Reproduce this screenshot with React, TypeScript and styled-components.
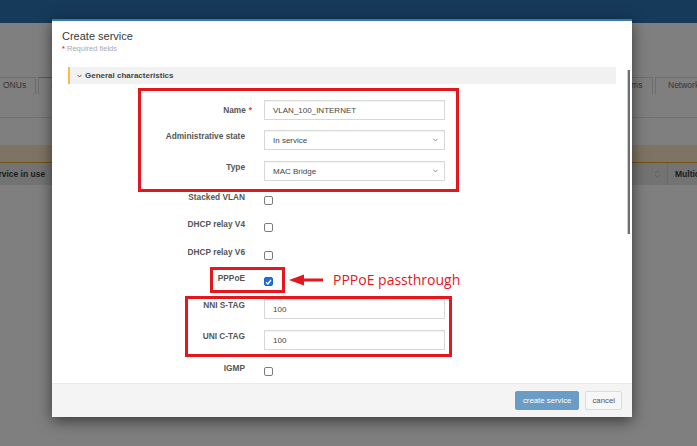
import styled, { createGlobalStyle } from "styled-components";

const GlobalStyle = createGlobalStyle`
  html, body {
    margin: 0;
    padding: 0;
    background: #fff;
    overflow: hidden;
  }
  body {
    font-family: "Liberation Sans", Arial, sans-serif;
  }
  * {
    box-sizing: border-box;
  }
`;

const Page = styled.div`
  position: relative;
  width: 697px;
  height: 446px;
  overflow: hidden;
  background: #fff;
`;

/* ---------- background page (dimmed behind the dialog) ---------- */

const TopBar = styled.div`
  height: 23px;
  background: #2c74b4;
`;

const SubHeader = styled.div`
  height: 54px;
`;

const TabStrip = styled.div`
  display: flex;
  justify-content: space-between;
  height: 17px;
  margin: 0 -24px 0 -10px;
`;

const TabGroup = styled.div`
  display: flex;
  gap: 2px;
`;

const Tab = styled.div<{ $active?: boolean; $w: number }>`
  width: ${({ $w }) => $w}px;
  height: 17px;
  padding-left: 12px;
  border: 1px solid #ddd;
  border-top: 1px solid ${({ $active }) => ($active ? "#e9b53a" : "#ddd")};
  border-bottom: none;
  font-size: 8.5px;
  line-height: 15px;
  color: #6a6a6a;
  white-space: nowrap;
  overflow: hidden;
`;

const Toolbar = styled.div`
  height: 24px;
  border-bottom: 1px solid #e3e3e3;
`;

const Spacer = styled.div`
  height: 27px;
`;

const WarningBand = styled.div`
  height: 18px;
  background: #fde9c6;
  border-bottom: 1px solid #e0a426;
`;

const TableHead = styled.div`
  display: flex;
  justify-content: space-between;
  align-items: center;
  height: 22px;
  background: #e7e7e7;
  margin: 0 -28px 0 -12px;
`;

const HeadCell = styled.div<{ $w?: number }>`
  width: ${({ $w }) => ($w ? `${$w}px` : "auto")};
  font-size: 8.5px;
  font-weight: bold;
  color: #3a3a3a;
  white-space: nowrap;
`;

const HeadRight = styled.div`
  display: flex;
  align-items: center;
  height: 100%;
`;

const SortIcon = styled.div`
  width: 19px;
  display: flex;
  justify-content: center;
  color: #b5b5b5;
`;

const HeadSep = styled.div`
  width: 1px;
  height: 100%;
  background: #d7d7d7;
  margin-right: 7px;
`;

const Backdrop = styled.div`
  position: absolute;
  inset: 0;
  background: rgba(0, 0, 0, 0.5);
`;

/* ---------- dialog ---------- */

const Modal = styled.div`
  position: absolute;
  left: 52px;
  top: 19px;
  width: 580px;
  height: 398px;
  display: flex;
  flex-direction: column;
  background: #fff;
  border-top: 2px solid #3a78b0;
  box-shadow: 0 4px 14px rgba(0, 0, 0, 0.55);
`;

const Header = styled.div`
  padding: 8px 10px 0;
`;

const Title = styled.div`
  font-size: 11px;
  line-height: 14px;
  color: #3a3a3a;
`;

const Required = styled.div`
  margin-top: 1px;
  font-size: 7.5px;
  line-height: 10px;
  color: #a9a9a9;
`;

const Star = styled.span`
  color: #e33;
  font-weight: bold;
`;

const Body = styled.div`
  flex: 1;
  padding: 13px 16px 0;
  overflow: hidden;
`;

const Scrollbar = styled.div`
  position: absolute;
  left: 575px;
  top: 49px;
  width: 3px;
  height: 164px;
  background: #6e6e6e;
  border-left: 1px solid #cfcfcf;
`;

const SectionBar = styled.div`
  display: flex;
  align-items: center;
  gap: 3px;
  height: 17px;
  padding-left: 7px;
  background: #f1f1f1;
  border-left: 2px solid #f0c24c;
  font-size: 8px;
  font-weight: bold;
  color: #444;
`;

const Form = styled.div`
  display: flex;
  flex-direction: column;
  padding-top: 16px;
`;

const Row = styled.div<{ $h: number }>`
  display: flex;
  align-items: flex-start;
  height: ${({ $h }) => $h}px;
`;

const Label = styled.div<{ $pt?: number }>`
  width: 196px;
  padding: ${({ $pt }) => $pt ?? 0}px 19px 0 0;
  text-align: right;
  font-size: 8.3px;
  font-weight: bold;
  line-height: 12px;
  color: #555;
  white-space: nowrap;
`;

const ReqStar = styled.span`
  color: #e33;
  margin-left: 3px;
  margin-right: -7px;
`;

const Field = styled.div`
  width: 181px;
  height: 20px;
  display: flex;
  align-items: center;
  justify-content: space-between;
  padding: 0 6px 0 8px;
  border: 1px solid #d8d8d8;
  box-shadow: inset 0 1px 1px rgba(0, 0, 0, 0.05);
  font-size: 8px;
  color: #444;
  background: #fff;
`;

const Box = styled.div<{ $checked?: boolean }>`
  width: 9px;
  height: 9px;
  margin-top: 5px;
  border-radius: 2px;
  border: 1px solid ${({ $checked }) => ($checked ? "#1a64c8" : "#7b7b7b")};
  background: ${({ $checked }) => ($checked ? "#1f6fd8" : "#fff")};
  display: flex;
  align-items: center;
  justify-content: center;
`;

const Footer = styled.div`
  height: 34px;
  display: flex;
  justify-content: flex-end;
  align-items: center;
  gap: 6px;
  padding-right: 10px;
  background: #f4f4f4;
  border-top: 1px solid #ebebeb;
`;

const Button = styled.div<{ $primary?: boolean }>`
  height: 19px;
  padding: 0 ${({ $primary }) => ($primary ? 7 : 6)}px;
  display: flex;
  align-items: center;
  border-radius: 2px;
  font-size: 7.8px;
  color: ${({ $primary }) => ($primary ? "#fff" : "#555")};
  background: ${({ $primary }) => ($primary ? "#6b9cc5" : "#f7f7f7")};
  border: 1px solid ${({ $primary }) => ($primary ? "#6b9cc5" : "#dcdcdc")};
`;

/* ---------- red annotations drawn over the screenshot ---------- */

const Frame = styled.div<{ $x: number; $y: number; $w: number; $h: number }>`
  position: absolute;
  left: ${({ $x }) => $x}px;
  top: ${({ $y }) => $y}px;
  width: ${({ $w }) => $w}px;
  height: ${({ $h }) => $h}px;
  border: 3px solid #e4161e;
  pointer-events: none;
`;

const Arrow = styled.svg`
  position: absolute;
  left: 288px;
  top: 274px;
`;

const Note = styled.div`
  position: absolute;
  left: 333px;
  top: 270px;
  font-family: "Open Sans", "Noto Sans", sans-serif;
  font-size: 14px;
  line-height: 19px;
  color: #e4161e;
  white-space: nowrap;
`;

function Chevron({ color = "#888" }: { color?: string }) {
  return (
    <svg width="5" height="4" viewBox="0 0 5 4">
      <path d="M0.5 0.8 L2.5 3 L4.5 0.8" fill="none" stroke={color} strokeWidth="0.9" />
    </svg>
  );
}

function CheckBox({ checked }: { checked?: boolean }) {
  return (
    <Box $checked={checked}>
      {checked ? (
        <svg width="7" height="6" viewBox="0 0 7 6">
          <path d="M1 3.2 L2.8 5 L6 1" fill="none" stroke="#fff" strokeWidth="1.4" />
        </svg>
      ) : null}
    </Box>
  );
}

export default function App() {
  return (
    <Page>
      <GlobalStyle />

      <TopBar />
      <SubHeader />
      <TabStrip>
        <TabGroup>
          <Tab $w={46}>ONUs</Tab>
          <Tab $w={70} $active>
            Services
          </Tab>
        </TabGroup>
        <TabGroup>
          <Tab $w={50}>Alarms</Tab>
          <Tab $w={66}>Network</Tab>
        </TabGroup>
      </TabStrip>
      <Toolbar />
      <Spacer />
      <WarningBand />
      <TableHead>
        <HeadCell>Service in use</HeadCell>
        <HeadRight>
          <SortIcon>
            <svg width="7" height="10" viewBox="0 0 7 10">
              <path d="M1 4 L3.5 1.5 L6 4 M1 6 L3.5 8.5 L6 6" fill="none" stroke="currentColor" strokeWidth="0.8" />
            </svg>
          </SortIcon>
          <HeadSep />
          <HeadCell $w={50}>Multicast</HeadCell>
        </HeadRight>
      </TableHead>

      <Backdrop />

      <Modal>
        <Header>
          <Title>Create service</Title>
          <Required>
            <Star>*</Star> Required fields
          </Required>
        </Header>

        <Body>
          <SectionBar>
            <Chevron color="#555" />
            General characteristics
          </SectionBar>

          <Form>
            <Row $h={30}>
              <Label $pt={4}>
                Name<ReqStar>*</ReqStar>
              </Label>
              <Field>VLAN_100_INTERNET</Field>
            </Row>
            <Row $h={31}>
              <Label>Administrative state</Label>
              <Field>
                In service
                <Chevron />
              </Field>
            </Row>
            <Row $h={30}>
              <Label>Type</Label>
              <Field>
                MAC Bridge
                <Chevron />
              </Field>
            </Row>
            <Row $h={27}>
              <Label>Stacked VLAN</Label>
              <CheckBox />
            </Row>
            <Row $h={28}>
              <Label>DHCP relay V4</Label>
              <CheckBox />
            </Row>
            <Row $h={26}>
              <Label>DHCP relay V6</Label>
              <CheckBox />
            </Row>
            <Row $h={27}>
              <Label>PPPoE</Label>
              <CheckBox checked />
            </Row>
            <Row $h={31}>
              <Label>NNI S-TAG</Label>
              <Field>100</Field>
            </Row>
            <Row $h={32}>
              <Label>UNI C-TAG</Label>
              <Field>100</Field>
            </Row>
            <Row $h={20}>
              <Label>IGMP</Label>
              <CheckBox />
            </Row>
          </Form>
        </Body>

        <Scrollbar />

        <Footer>
          <Button $primary>create service</Button>
          <Button>cancel</Button>
        </Footer>
      </Modal>

      <Frame $x={138} $y={88} $w={321} $h={104} />
      <Frame $x={210} $y={267} $w={75} $h={26} />
      <Frame $x={185} $y={296} $w={267} $h={61} />
      <Arrow width="36" height="12" viewBox="0 0 36 12">
        <polygon points="1,6 16,0.5 16,11.5" fill="#e4161e" />
        <rect x="15" y="4.5" width="20" height="3" fill="#e4161e" />
      </Arrow>
      <Note>PPPoE passthrough</Note>
    </Page>
  );
}
